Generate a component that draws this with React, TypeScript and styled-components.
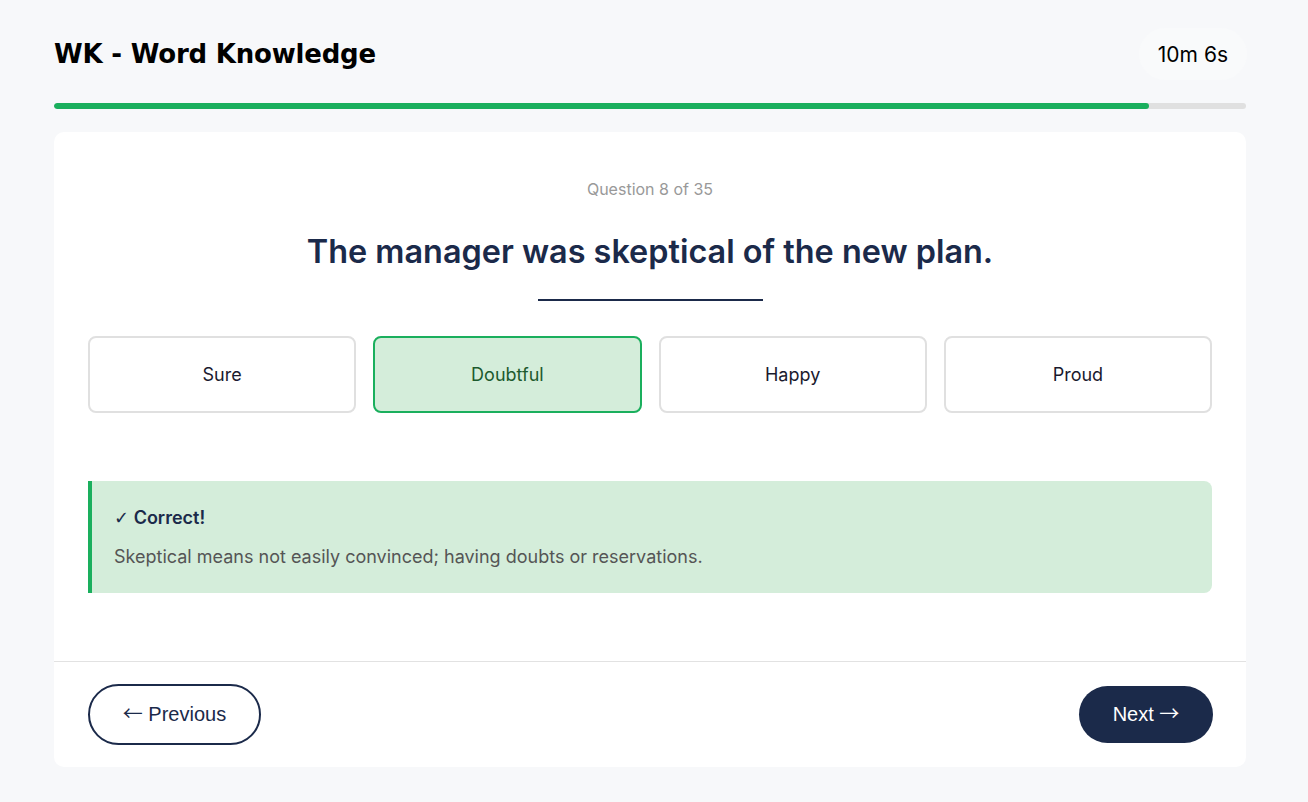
import React from "react";
import styled, { createGlobalStyle } from "styled-components";

const GlobalStyle = createGlobalStyle`
  * { box-sizing: border-box; }
  body {
    margin: 0;
    background: #f7f8fa;
    font-family: Inter, "Noto Sans", sans-serif;
    color: #1b2a4a;
  }
`;

const options = ["Sure", "Doubtful", "Happy", "Proud"];
const selected = "Doubtful";
const progress = 91.86;

export default function App() {
  return (
    <>
      <GlobalStyle />
      <Page>
        <Header>
          <Title>WK - Word Knowledge</Title>
          <Timer>10m 6s</Timer>
        </Header>
        <Track>
          <Fill style={{ width: `${progress}%` }} />
        </Track>
        <Card>
          <Body>
            <Counter>Question 8 of 35</Counter>
            <Question>The manager was skeptical of the new plan.</Question>
            <Underline />
            <Options>
              {options.map((o) => (
                <Option key={o} $selected={o === selected}>
                  {o}
                </Option>
              ))}
            </Options>
            <Feedback>
              <FeedbackTitle>
                <Check>✓</Check> Correct!
              </FeedbackTitle>
              <FeedbackText>
                Skeptical means not easily convinced; having doubts or reservations.
              </FeedbackText>
            </Feedback>
          </Body>
          <Footer>
            <PrevButton>
              <Arrow>←</Arrow> Previous
            </PrevButton>
            <NextButton>
              Next <Arrow>→</Arrow>
            </NextButton>
          </Footer>
        </Card>
      </Page>
    </>
  );
}

const Page = styled.div`
  padding: 28px 62px 34px 54px;
  display: flex;
  flex-direction: column;
`;

const Header = styled.div`
  display: flex;
  align-items: center;
  justify-content: space-between;
  height: 52px;
`;

const Title = styled.h1`
  margin: 0;
  font-family: "DejaVu Sans", sans-serif;
  font-size: 26px;
  font-weight: 700;
  color: #000;
  letter-spacing: -0.2px;
`;

const Timer = styled.div`
  height: 52px;
  padding: 0 19px;
  margin-right: -1px;
  display: flex;
  align-items: center;
  border-radius: 26px;
  background: #f9fafb;
  font-family: Inter, sans-serif;
  font-size: 21px;
  color: #000;
`;

const Track = styled.div`
  margin-top: 23px;
  height: 6px;
  border-radius: 3px;
  background: #e0e0e0;
  overflow: hidden;
`;

const Fill = styled.div`
  height: 100%;
  background: #1aaf5d;
  border-radius: 3px;
`;

const Card = styled.div`
  margin-top: 23px;
  background: #fff;
  border-radius: 10px;
  display: flex;
  flex-direction: column;
`;

const Body = styled.div`
  padding: 47px 34px 68px;
  display: flex;
  flex-direction: column;
  align-items: center;
`;

const Counter = styled.div`
  font-size: 16px;
  line-height: 20px;
  color: #999;
`;

const Question = styled.h2`
  margin: 33px 0 0;
  font-size: 32.4px;
  line-height: 39px;
  font-weight: 600;
  color: #1b2a4a;
`;

const Underline = styled.div`
  margin-top: 28px;
  width: 225px;
  height: 2px;
  background: #1b2a4a;
`;

const Options = styled.div`
  margin-top: 35px;
  width: 100%;
  display: grid;
  grid-template-columns: repeat(4, 1fr);
  gap: 17px;
`;

const Option = styled.button<{ $selected?: boolean }>`
  height: 77px;
  border-radius: 8px;
  border: 2px solid ${(p) => (p.$selected ? "#1aaf5d" : "#e0e0e0")};
  background: ${(p) => (p.$selected ? "#d4edda" : "#fff")};
  color: ${(p) => (p.$selected ? "#1d5a2e" : "#1a1a2e")};
  font-family: Inter, sans-serif;
  font-size: 18px;
  cursor: pointer;
`;

const Feedback = styled.div`
  margin-top: 68px;
  width: 100%;
  background: #d4edda;
  border-left: 4px solid #1aaf5d;
  border-radius: 0 8px 8px 0;
  padding: 24px 24px 23px 22px;
`;

const Check = styled.span`
  font-family: "DejaVu Sans", sans-serif;
  font-weight: 400;
`;

const Arrow = styled.span`
  font-family: "Noto Sans CJK JP", "DejaVu Sans", sans-serif;
  font-weight: 400;
  line-height: 0;
`;

const FeedbackTitle = styled.div`
  font-size: 18px;
  line-height: 26px;
  font-weight: 600;
  color: #1b2a4a;
`;

const FeedbackText = styled.div`
  margin-top: 13px;
  font-size: 18px;
  line-height: 26px;
  color: #555;
`;

const Footer = styled.div`
  height: 106px;
  border-top: 1px solid #e2e2e2;
  padding: 0 33px 0 34px;
  display: flex;
  align-items: center;
  justify-content: space-between;
`;

const PrevButton = styled.button`
  height: 61px;
  width: 173px;
  border: 2px solid #1b2a4a;
  border-radius: 31px;
  background: #fff;
  color: #1b2a4a;
  font-family: "Liberation Sans", Arial, sans-serif;
  font-size: 20px;
  line-height: 23px;
  cursor: pointer;
`;

const NextButton = styled.button`
  height: 57px;
  width: 134px;
  border: none;
  border-radius: 29px;
  background: #1b2a4a;
  color: #fff;
  font-family: "Liberation Sans", Arial, sans-serif;
  font-size: 20px;
  line-height: 23px;
  cursor: pointer;
`;
